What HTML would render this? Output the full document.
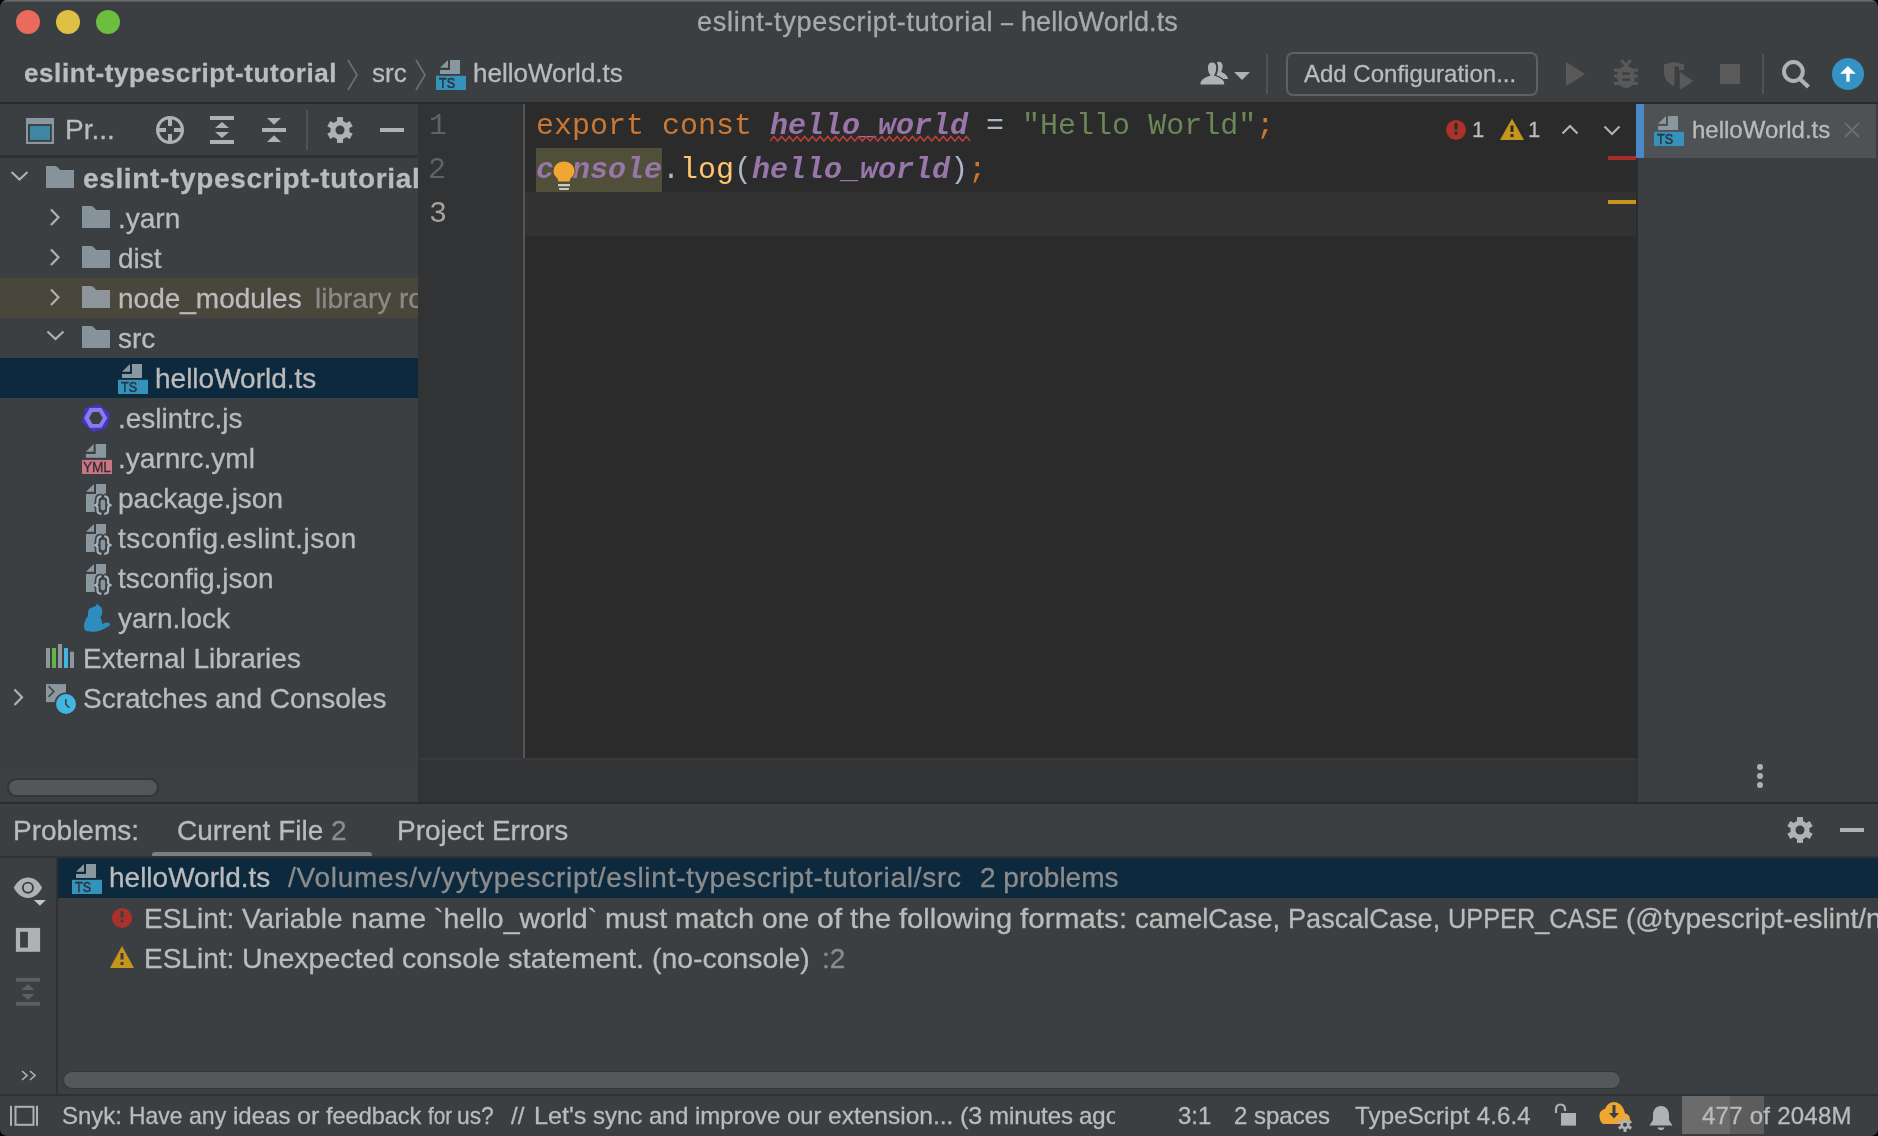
<!DOCTYPE html>
<html><head><meta charset="utf-8">
<style>
html,body{margin:0;padding:0;background:#000;width:1878px;height:1136px;overflow:hidden}
*{box-sizing:border-box}
#win{-webkit-font-smoothing:antialiased;will-change:transform;position:absolute;left:0;top:0;width:1878px;height:1136px;background:#3C3F41;border-radius:7px;overflow:hidden;font-family:"Liberation Sans",sans-serif;color:#BBBBBB}
.a{position:absolute}
.t{position:absolute;white-space:pre;line-height:1;-webkit-text-stroke:0.3px currentColor}
.tr{position:absolute;white-space:pre;line-height:1;font-size:28px;color:#BBBBBB;-webkit-text-stroke:0.3px currentColor}
.m{position:absolute;white-space:pre;line-height:1;font-family:"Liberation Mono",monospace;font-size:30px}
.kw{color:#CC7832}.gv{color:#9876AA;font-style:italic;font-weight:bold}.op{color:#A9B7C6}.st{color:#6A8759}.fn{color:#FFC66D}
svg.i{position:absolute;overflow:visible}
</style></head><body>
<div id="win">
  <!-- ===== TITLE BAR ===== -->
  <div class="a" style="left:0;top:0;width:1878px;height:1px;background:#6A6B6C"></div><div class="a" style="left:0;top:1px;width:1878px;height:1px;background:#56585A"></div>
  <div class="a" style="left:16px;top:10px;width:24px;height:24px;border-radius:50%;background:#EA6A5B"></div>
  <div class="a" style="left:56px;top:10px;width:24px;height:24px;border-radius:50%;background:#DEC045"></div>
  <div class="a" style="left:96px;top:10px;width:24px;height:24px;border-radius:50%;background:#6DBE3F"></div>
  <div class="t" style="left:697px;top:9px;font-size:27px;color:#A9A9A9;letter-spacing:0.72px">eslint-typescript-tutorial</div>
  <div class="t" style="left:1001px;top:9px;font-size:27px;color:#A9A9A9;transform:scaleX(0.8);transform-origin:0 0">–</div>
  <div class="t" style="left:1021px;top:9px;font-size:27px;color:#A9A9A9;letter-spacing:0.1px">helloWorld.ts</div>

  <!-- ===== NAV BAR ===== -->
  <div class="t" style="left:24px;top:60px;font-size:26px;font-weight:bold;color:#BCBCBC;letter-spacing:0.6px">eslint-typescript-tutorial</div>
  <svg class="i" style="left:340px;top:56px" width="24" height="36"><path d="M8 4 L17 19 L8 34" fill="none" stroke="#6F7173" stroke-width="1.6"/></svg>
  <div class="t" style="left:372px;top:60px;font-size:26px;color:#BBBBBB">src</div>
  <svg class="i" style="left:408px;top:56px" width="24" height="36"><path d="M8 4 L17 19 L8 34" fill="none" stroke="#6F7173" stroke-width="1.6"/></svg>
  <!-- TS icon nav -->
  <svg class="i" style="left:436px;top:60px" width="30" height="30" viewBox="0 0 30 30"><path d="M4 7.7 L12 0 L12 7.7 Z" fill="#8B979F"/>
        <path d="M14 0 H24 V14 H4 V10 H14 Z" fill="#8B979F"/>
        <rect x="0" y="15.8" width="30" height="14.2" fill="#3592BA"/>
        <text x="3" y="27.8" font-family="Liberation Sans" font-size="14" fill="#2B3640" stroke="#2B3640" stroke-width="0.5" textLength="16" lengthAdjust="spacingAndGlyphs">TS</text></svg>
  <div class="t" style="left:473px;top:60px;font-size:26px;color:#BBBBBB">helloWorld.ts</div>

  <!-- users icon -->
  <svg class="i" style="left:1195px;top:55px" width="60" height="40" viewBox="0 0 60 40">
    <path d="M21.8 7.5 C24.5 5.8 27.8 7.5 27.6 11.5 C27.5 14 26.8 15.5 26.2 16.8 C28.5 18.5 32.5 19.5 33.2 24 L28 24 C26 22 23 21 21 20.5 C22.8 18 23.5 14 23 11 C22.8 9.5 22.5 8.3 21.8 7.5 Z" fill="#B1B1B1"/>
    <path d="M17.1 7 C20.5 7 22 9.5 21.9 13 C21.8 16 21 18.5 19.8 20.2 C22.5 21.5 28.5 22.5 29.8 27.5 L29.8 30 L4.9 30 L4.9 28 C5.5 23 10.5 21.6 14.6 20.2 C13.2 18.5 12.3 16 12.3 13 C12.2 9.5 13.8 7 17.1 7 Z" fill="#B1B1B1" stroke="#3C3F41" stroke-width="1.2"/>
    <path d="M39.1 17.1 L54.9 17.1 L47 25 Z" fill="#B1B1B1"/>
  </svg>
  <div class="a" style="left:1266px;top:54px;width:2px;height:40px;background:#505254"></div>
  <div class="a" style="left:1286px;top:52px;width:252px;height:44px;border:2px solid #5E6163;border-radius:7px"></div>
  <div class="t" style="left:1304px;top:62px;font-size:24px;color:#BBBBBB">Add Configuration...</div>
  <!-- run / debug / coverage / stop (disabled) -->
  <svg class="i" style="left:1555px;top:50px" width="160" height="50" viewBox="1555 50 160 50">
    <path d="M1566 62 L1585.2 74 L1566 86.2 Z" fill="#59595A"/>
    <g fill="#59595A">
      <path d="M1621.3 60.3 L1626 65.5 L1630.7 60.3" fill="none" stroke="#59595A" stroke-width="3"/>
      <ellipse cx="1626" cy="77" rx="9" ry="11"/>
      <rect x="1614" y="68.7" width="24" height="3"/>
      <rect x="1614" y="74.7" width="24" height="3"/>
      <rect x="1614" y="82" width="24" height="3"/>
    </g>
    <rect x="1622.3" y="72.3" width="7.7" height="2.4" fill="#3C3F41"/>
    <rect x="1622.3" y="78.5" width="7.7" height="2.3" fill="#3C3F41"/>
    <path d="M1664 64.5 L1674 62 L1684 64.5 L1684 70 L1679 70 L1679 66.5 L1674.5 66.5 L1674.5 83 L1674 86.2 C1668 83 1664 79 1664 72 Z" fill="#59595A"/>
    <path d="M1679.8 72.1 L1693.4 81 L1679.8 89.9 Z" fill="#59595A"/>
  </svg>
  <div class="a" style="left:1720px;top:64px;width:20px;height:20px;background:#5A5A5A"></div>
  <div class="a" style="left:1762px;top:54px;width:2px;height:40px;background:#505254"></div>
  <svg class="i" style="left:1770px;top:50px" width="108" height="50" viewBox="1770 50 108 50">
    <circle cx="1793.4" cy="71.5" r="9.4" fill="none" stroke="#AFB1B3" stroke-width="4"/>
    <path d="M1799.5 78.5 L1808.5 87" stroke="#AFB1B3" stroke-width="4.2"/>
    <circle cx="1848" cy="74" r="16" fill="#3592C4"/>
    <path d="M1840.1 73.7 L1847.9 66.1 L1855.8 73.7 L1849.7 73.7 L1849.7 81.8 L1846.3 81.8 L1846.3 73.7 Z" fill="#FFFFFF"/>
  </svg>

  <div class="a" style="left:0;top:102px;width:1878px;height:2px;background:#2B2B2B"></div>

  <!-- ===== PROJECT PANEL ===== -->
  <div class="a" style="left:0;top:155px;width:418px;height:3px;background:#2F3133"></div>
  <svg class="i" style="left:26px;top:118px" width="28" height="26" viewBox="0 0 28 26">
    <rect x="0" y="0" width="28" height="26" fill="#8B979F"/>
    <rect x="2.1" y="6.1" width="23.7" height="17.7" fill="#3A3A3A"/>
    <rect x="3.9" y="7.9" width="20.2" height="14.2" fill="#3E87A4"/>
  </svg>
  <div class="tr" style="left:65px;top:116px">Pr...</div>
  <svg class="i" style="left:150px;top:110px" width="260" height="40" viewBox="0 0 260 40">
    <g fill="#AFB1B3">
      <circle cx="20" cy="20" r="12.4" fill="none" stroke="#AFB1B3" stroke-width="3.2"/>
      <rect x="18" y="8" width="4" height="8"/><rect x="18" y="24" width="4" height="8"/>
      <rect x="8" y="18" width="8" height="4"/><rect x="24" y="18" width="8" height="4"/>
      <rect x="60" y="6" width="24" height="4"/><rect x="60" y="30" width="24" height="4"/>
      <path d="M65 18 L72 12 L79 18 Z"/><path d="M65 22 L72 28 L79 22 Z"/>
      <rect x="112" y="18" width="24" height="4"/>
      <path d="M117 8 L131 8 L124 14.8 Z"/><path d="M117 32 L124 25.2 L131 32 Z"/>
    </g>
  </svg>
  <div class="a" style="left:306px;top:110px;width:2px;height:40px;background:#505254"></div>
  <svg class="i" style="left:320px;top:110px" width="90" height="40" viewBox="320 110 90 40">
    <g fill="#AFB1B3">
      <circle cx="340" cy="130" r="9.6"/>
      <rect x="337" y="117.1" width="6" height="25.8"/>
      <rect x="337" y="117.1" width="6" height="25.8" transform="rotate(60 340 130)"/>
      <rect x="337" y="117.1" width="6" height="25.8" transform="rotate(120 340 130)"/>
    </g>
    <circle cx="340" cy="130" r="4.5" fill="#3C3F41"/>
    <rect x="380" y="128" width="24" height="4" fill="#AFB1B3"/>
  </svg>

  <!-- tree -->
  <div class="a" style="left:0;top:278px;width:418px;height:40px;background:#49463B"></div>
  <div class="a" style="left:0;top:358px;width:418px;height:40px;background:#0D293E"></div>
  <div class="a" style="left:0;top:158px;width:418px;height:560px;overflow:hidden">
    <!-- row 0 -->
    <svg class="i" style="left:10px;top:10px" width="20" height="20"><path d="M1.5 4 L9.5 11.5 L17.5 4" fill="none" stroke="#AFB1B3" stroke-width="2.2"/></svg>
    <svg class="i" style="left:46px;top:8px" width="28" height="22"><path d="M0 0 H8.7 C10.5 0 11.5 1 12.5 2 L14 4 H28 V22 H0 Z" fill="#87939A"/></svg>
    <div class="tr" style="left:83px;top:7px;font-weight:bold;letter-spacing:0.65px">eslint-typescript-tutorial</div>
    <!-- row 1 .yarn -->
    <svg class="i" style="left:48px;top:50px" width="14" height="20"><path d="M3 1.5 L10.5 9.2 L3 17" fill="none" stroke="#AFB1B3" stroke-width="2.2"/></svg>
    <svg class="i" style="left:82px;top:48px" width="28" height="22"><path d="M0 0 H8.7 C10.5 0 11.5 1 12.5 2 L14 4 H28 V22 H0 Z" fill="#87939A"/></svg>
    <div class="tr" style="left:118px;top:47px">.yarn</div>
    <!-- row 2 dist -->
    <svg class="i" style="left:48px;top:90px" width="14" height="20"><path d="M3 1.5 L10.5 9.2 L3 17" fill="none" stroke="#AFB1B3" stroke-width="2.2"/></svg>
    <svg class="i" style="left:82px;top:88px" width="28" height="22"><path d="M0 0 H8.7 C10.5 0 11.5 1 12.5 2 L14 4 H28 V22 H0 Z" fill="#87939A"/></svg>
    <div class="tr" style="left:118px;top:87px">dist</div>
    <!-- row 3 node_modules -->
    <svg class="i" style="left:48px;top:130px" width="14" height="20"><path d="M3 1.5 L10.5 9.2 L3 17" fill="none" stroke="#AFB1B3" stroke-width="2.2"/></svg>
    <svg class="i" style="left:82px;top:128px" width="28" height="22"><path d="M0 0 H8.7 C10.5 0 11.5 1 12.5 2 L14 4 H28 V22 H0 Z" fill="#8D959A"/></svg>
    <div class="tr" style="left:118px;top:127px">node_modules</div>
    <div class="tr" style="left:315px;top:127px;color:#8A8A87">library root</div>
    <!-- row 4 src -->
    <svg class="i" style="left:46px;top:170px" width="20" height="20"><path d="M1.5 3.5 L9.5 11 L17.5 3.5" fill="none" stroke="#AFB1B3" stroke-width="2.2"/></svg>
    <svg class="i" style="left:82px;top:168px" width="28" height="22"><path d="M0 0 H8.7 C10.5 0 11.5 1 12.5 2 L14 4 H28 V22 H0 Z" fill="#87939A"/></svg>
    <div class="tr" style="left:118px;top:167px">src</div>
    <!-- row 5 helloWorld.ts -->
    <svg class="i" style="left:118px;top:206px" width="30" height="30" viewBox="0 0 30 30"><path d="M4 7.7 L12 0 L12 7.7 Z" fill="#8B979F"/>
        <path d="M14 0 H24 V14 H4 V10 H14 Z" fill="#8B979F"/>
        <rect x="0" y="15.8" width="30" height="14.2" fill="#3592BA"/>
        <text x="3" y="27.8" font-family="Liberation Sans" font-size="14" fill="#2B3640" stroke="#2B3640" stroke-width="0.5" textLength="16" lengthAdjust="spacingAndGlyphs">TS</text></svg>
    <div class="tr" style="left:155px;top:207px">helloWorld.ts</div>
    <!-- row 6 .eslintrc.js -->
    <svg class="i" style="left:76px;top:242px" width="40" height="40" viewBox="0 0 40 40">
      <path d="M22.5 4.2 L34.2 13.7 L31 27.8 L17.3 32 L6 22.2 L9.2 8.1 Z M13 18 L16.5 24 L23.2 24 L26.8 18 L23.2 12 L16.5 12 Z" fill="#4B32C3" fill-rule="evenodd"/>
      <path d="M8.1 18 L13.7 8.1 L25.4 8.1 L31.3 18 L25.4 27.8 L13.7 27.8 Z M13 18 L16.5 24 L23.2 24 L26.8 18 L23.2 12 L16.5 12 Z" fill="#8080E8" fill-rule="evenodd"/>
    </svg>
    <div class="tr" style="left:118px;top:247px">.eslintrc.js</div>
    <!-- row 7 .yarnrc.yml -->
    <svg class="i" style="left:82px;top:286px" width="30" height="30" viewBox="0 0 30 30">
      <path d="M3.9 7.8 L11.6 0 L11.6 7.8 Z" fill="#8B979F"/>
      <path d="M13.7 0 H24.1 V13.7 H3.9 V9.9 H13.7 Z" fill="#8B979F"/>
      <rect x="0" y="15.9" width="30" height="14.1" fill="#C77783"/>
      <text x="0.9" y="27.6" font-family="Liberation Sans" font-size="14" fill="#3A2A30" stroke="#3A2A30" stroke-width="0.3" textLength="28" lengthAdjust="spacingAndGlyphs">YML</text>
    </svg>
    <div class="tr" style="left:118px;top:287px">.yarnrc.yml</div>
    <!-- rows 8-10 json -->
    <svg class="i" style="left:76px;top:320px" width="40" height="40" viewBox="0 0 40 40"><path d="M10 13.7 L18 6 L18 13.7 Z" fill="#8B979F"/>
        <path d="M20 6 H30 V16.5 H21 V34 H10 V16 H20 Z" fill="#8B979F"/>
        <path d="M25.4 18.3 C22.5 18.3 21.5 19.5 21.5 22 L21.5 24.5 C21.5 26.2 20.5 27.1 18.3 27.1 C20.5 27.1 21.5 28 21.5 29.7 L21.5 32.5 C21.5 35 22.5 35.8 25.4 35.8 M28.2 18.3 C31.1 18.3 32.1 19.5 32.1 22 L32.1 24.5 C32.1 26.2 33.1 27.1 35.6 27.1 C33.1 27.1 32.1 28 32.1 29.7 L32.1 32.5 C32.1 35 31.1 35.8 28.2 35.8" fill="none" stroke="#3C3F41" stroke-width="5.6"/>
        <rect x="22.5" y="19.5" width="8.6" height="15" fill="#3C3F41"/>
        <path d="M25.4 18.3 C22.5 18.3 21.5 19.5 21.5 22 L21.5 24.5 C21.5 26.2 20.5 27.1 18.3 27.1 C20.5 27.1 21.5 28 21.5 29.7 L21.5 32.5 C21.5 35 22.5 35.8 25.4 35.8 M28.2 18.3 C31.1 18.3 32.1 19.5 32.1 22 L32.1 24.5 C32.1 26.2 33.1 27.1 35.6 27.1 C33.1 27.1 32.1 28 32.1 29.7 L32.1 32.5 C32.1 35 31.1 35.8 28.2 35.8" fill="none" stroke="#A7B3BD" stroke-width="2.2"/>
        <rect x="24.6" y="21.5" width="4.6" height="10.9" rx="2.3" fill="#8B979F"/></svg>
    <div class="tr" style="left:118px;top:327px">package.json</div>
    <svg class="i" style="left:76px;top:360px" width="40" height="40" viewBox="0 0 40 40"><path d="M10 13.7 L18 6 L18 13.7 Z" fill="#8B979F"/>
        <path d="M20 6 H30 V16.5 H21 V34 H10 V16 H20 Z" fill="#8B979F"/>
        <path d="M25.4 18.3 C22.5 18.3 21.5 19.5 21.5 22 L21.5 24.5 C21.5 26.2 20.5 27.1 18.3 27.1 C20.5 27.1 21.5 28 21.5 29.7 L21.5 32.5 C21.5 35 22.5 35.8 25.4 35.8 M28.2 18.3 C31.1 18.3 32.1 19.5 32.1 22 L32.1 24.5 C32.1 26.2 33.1 27.1 35.6 27.1 C33.1 27.1 32.1 28 32.1 29.7 L32.1 32.5 C32.1 35 31.1 35.8 28.2 35.8" fill="none" stroke="#3C3F41" stroke-width="5.6"/>
        <rect x="22.5" y="19.5" width="8.6" height="15" fill="#3C3F41"/>
        <path d="M25.4 18.3 C22.5 18.3 21.5 19.5 21.5 22 L21.5 24.5 C21.5 26.2 20.5 27.1 18.3 27.1 C20.5 27.1 21.5 28 21.5 29.7 L21.5 32.5 C21.5 35 22.5 35.8 25.4 35.8 M28.2 18.3 C31.1 18.3 32.1 19.5 32.1 22 L32.1 24.5 C32.1 26.2 33.1 27.1 35.6 27.1 C33.1 27.1 32.1 28 32.1 29.7 L32.1 32.5 C32.1 35 31.1 35.8 28.2 35.8" fill="none" stroke="#A7B3BD" stroke-width="2.2"/>
        <rect x="24.6" y="21.5" width="4.6" height="10.9" rx="2.3" fill="#8B979F"/></svg>
    <div class="tr" style="left:118px;top:367px;letter-spacing:0.5px">tsconfig.eslint.json</div>
    <svg class="i" style="left:76px;top:400px" width="40" height="40" viewBox="0 0 40 40"><path d="M10 13.7 L18 6 L18 13.7 Z" fill="#8B979F"/>
        <path d="M20 6 H30 V16.5 H21 V34 H10 V16 H20 Z" fill="#8B979F"/>
        <path d="M25.4 18.3 C22.5 18.3 21.5 19.5 21.5 22 L21.5 24.5 C21.5 26.2 20.5 27.1 18.3 27.1 C20.5 27.1 21.5 28 21.5 29.7 L21.5 32.5 C21.5 35 22.5 35.8 25.4 35.8 M28.2 18.3 C31.1 18.3 32.1 19.5 32.1 22 L32.1 24.5 C32.1 26.2 33.1 27.1 35.6 27.1 C33.1 27.1 32.1 28 32.1 29.7 L32.1 32.5 C32.1 35 31.1 35.8 28.2 35.8" fill="none" stroke="#3C3F41" stroke-width="5.6"/>
        <rect x="22.5" y="19.5" width="8.6" height="15" fill="#3C3F41"/>
        <path d="M25.4 18.3 C22.5 18.3 21.5 19.5 21.5 22 L21.5 24.5 C21.5 26.2 20.5 27.1 18.3 27.1 C20.5 27.1 21.5 28 21.5 29.7 L21.5 32.5 C21.5 35 22.5 35.8 25.4 35.8 M28.2 18.3 C31.1 18.3 32.1 19.5 32.1 22 L32.1 24.5 C32.1 26.2 33.1 27.1 35.6 27.1 C33.1 27.1 32.1 28 32.1 29.7 L32.1 32.5 C32.1 35 31.1 35.8 28.2 35.8" fill="none" stroke="#A7B3BD" stroke-width="2.2"/>
        <rect x="24.6" y="21.5" width="4.6" height="10.9" rx="2.3" fill="#8B979F"/></svg>
    <div class="tr" style="left:118px;top:407px">tsconfig.json</div>
    <!-- row 11 yarn.lock -->
    <svg class="i" style="left:76px;top:440px" width="40" height="40" viewBox="0 0 40 40">
      <path d="M21.1 6 C22 6.3 22.5 7.2 23 7.7 C24.5 8.3 25.6 9.3 25.9 11 C26.3 13 26.2 15 25.9 16 C25.6 17.5 24.8 18.5 24.4 19.6 C25.3 21 25.9 23 26.3 26.2 C27.5 25.5 29 24.6 31 24.5 C33 24.4 34.2 25.3 34 26.8 C33.8 28 32.5 28.6 31.5 29 C29 30.2 27 31.5 24.6 32.4 C21.5 33.5 18.5 33.8 15.8 33.7 C13.5 33.6 11.5 33.5 10.2 33 C8.5 32.3 8 30.5 8 28.5 C8 25.5 8.8 23 10 21 C10.7 19.8 11.2 19 11.9 18.2 C11.9 16.5 12 14 12.4 12.3 C13 10.5 14.5 9.8 16.9 9.2 C18.3 8.8 19.4 8.2 20 7.2 C20.4 6.5 20.7 6 21.1 6 Z" fill="#2E8DBE"/>
    </svg>
    <div class="tr" style="left:118px;top:447px">yarn.lock</div>
    <!-- row 12 External Libraries -->
    <svg class="i" style="left:46px;top:490px" width="28" height="24" viewBox="46 648 28 24">
      <rect x="46" y="648" width="4" height="20" fill="#8B979F"/>
      <rect x="52" y="648" width="4" height="20" fill="#62B543"/>
      <rect x="58" y="644" width="4" height="24" fill="#8B979F"/>
      <rect x="64" y="648" width="4" height="20" fill="#40B6E0"/>
      <rect x="70" y="651.7" width="4" height="16.3" fill="#8B979F"/>
    </svg>
    <div class="tr" style="left:83px;top:487px">External Libraries</div>
    <!-- row 13 Scratches -->
    <svg class="i" style="left:12px;top:530px" width="14" height="20"><path d="M2.5 1.5 L10 9.2 L2.5 17" fill="none" stroke="#AFB1B3" stroke-width="2.2"/></svg>
    <svg class="i" style="left:0;top:520px" width="80" height="40" viewBox="0 678 80 40">
      <rect x="46" y="684.1" width="20" height="18" fill="#8B979F"/>
      <path d="M48.6 686.2 L53.8 691.5 L48.6 696.8" fill="none" stroke="#3C3F41" stroke-width="1.6"/>
      <circle cx="66" cy="704" r="11.6" fill="#3C3F41"/>
      <circle cx="66" cy="704" r="10" fill="#40B6E0"/>
      <path d="M65.8 699.3 L65.8 704.2 L69.4 707.7" fill="none" stroke="#3C3F41" stroke-width="1.6"/>
    </svg>
    <div class="tr" style="left:83px;top:527px">Scratches and Consoles</div>
  </div>
  <!-- project scrollbar -->
  <div class="a" style="left:0;top:774px;width:418px;height:28px;background:#3D4043"></div>
  <div class="a" style="left:7px;top:778px;width:152px;height:19px;border-radius:10px;background:#555658;border:2px solid #333537"></div>

  <!-- ===== EDITOR ===== -->
  <div class="a" style="left:418px;top:104px;width:105px;height:654px;background:#313335"></div>
  <div class="a" style="left:523px;top:104px;width:2px;height:654px;background:#555555"></div>
  <div class="a" style="left:525px;top:104px;width:1111px;height:654px;background:#2B2B2B"></div>
  <div class="a" style="left:525px;top:192px;width:1111px;height:44px;background:#323232"></div>
  <div class="a" style="left:418px;top:758px;width:1220px;height:44px;background:#313335"></div>
  <div class="a" style="left:420px;top:758px;width:1216px;height:2px;background:#39393B"></div>
  <!-- line numbers -->
  <div class="m" style="left:429px;top:111px;color:#606366">1</div>
  <div class="m" style="left:428px;top:155px;color:#606366">2</div>
  <div class="m" style="left:429px;top:199px;color:#A4A3A3">3</div>
  <!-- code -->
  <div class="a" style="left:536px;top:148px;width:126px;height:44px;background:#504F3A"></div>
  <div class="m" style="left:536px;top:111px"><span class="kw">export const </span><span class="gv">hello_world</span><span class="op"> = </span><span class="st">"Hello World"</span><span class="kw">;</span></div>
  <div class="m" style="left:536px;top:155px"><span class="gv">console</span><span class="op">.</span><span class="fn">log</span><span class="op">(</span><span class="gv">hello_world</span><span class="op">)</span><span class="kw">;</span></div>
  <svg class="i" style="left:760px;top:130px" width="220" height="16" viewBox="760 130 220 16">
    <path d="M770.0 141 L773.9 136.5 L777.7 141 L781.6 136.5 L785.4 141 L789.3 136.5 L793.1 141 L797.0 136.5 L800.8 141 L804.7 136.5 L808.5 141 L812.4 136.5 L816.2 141 L820.1 136.5 L823.9 141 L827.8 136.5 L831.6 141 L835.5 136.5 L839.3 141 L843.2 136.5 L847.0 141 L850.9 136.5 L854.7 141 L858.6 136.5 L862.4 141 L866.3 136.5 L870.1 141 L874.0 136.5 L877.8 141 L881.7 136.5 L885.5 141 L889.4 136.5 L893.2 141 L897.1 136.5 L900.9 141 L904.8 136.5 L908.6 141 L912.5 136.5 L916.3 141 L920.2 136.5 L924.0 141 L927.9 136.5 L931.7 141 L935.6 136.5 L939.4 141 L943.3 136.5 L947.1 141 L951.0 136.5 L954.8 141 L958.7 136.5 L962.5 141 L966.4 136.5 L970.2 141" fill="none" stroke="#BC3F3C" stroke-width="1.5"/>
  </svg>
  <!-- lightbulb -->
  <svg class="i" style="left:550px;top:158px" width="30" height="36" viewBox="550 158 30 36">
    <path d="M558 182 L570 182 L571 178.5 C573 176.5 575 174.5 575 171.5 C575 165.5 570 161 564 161 C558 161 553 165.5 553 171.5 C553 174.5 555 176.5 557 178.5 Z" fill="#F0A732" stroke="#4F4D39" stroke-width="1"/>
    <rect x="558" y="184" width="12" height="2.3" fill="#C9C9C9"/>
    <path d="M558.8 188 L569.2 188 L568.5 190 L559.5 190 Z" fill="#C9C9C9"/>
  </svg>
  <!-- inspection widget -->
  <svg class="i" style="left:1440px;top:114px" width="190" height="30" viewBox="1440 114 190 30">
    <circle cx="1456" cy="130" r="10" fill="#AC312C"/>
    <rect x="1454.5" y="123" width="3" height="6.5" fill="#2B2B2B"/>
    <rect x="1454.5" y="131.5" width="3" height="3" fill="#2B2B2B"/>
    <path d="M1512 118.5 L1524 140 L1500 140 Z" fill="#C7951B"/>
    <rect x="1510.5" y="125.5" width="3" height="6.5" fill="#2B2B2B"/>
    <rect x="1510.5" y="134" width="3" height="3" fill="#2B2B2B"/>
    <path d="M1562.5 133.5 L1570 126 L1577.5 133.5" fill="none" stroke="#AFB1B3" stroke-width="2.2"/>
    <path d="M1604.5 126.5 L1612 134 L1619.5 126.5" fill="none" stroke="#AFB1B3" stroke-width="2.2"/>
  </svg>
  <div class="t" style="left:1472px;top:119px;font-size:22px;color:#BBBBBB">1</div>
  <div class="t" style="left:1528px;top:119px;font-size:22px;color:#BBBBBB">1</div>
  <!-- error stripe marks -->
  <div class="a" style="left:1608px;top:156px;width:28px;height:4px;background:#A72D2A"></div>
  <div class="a" style="left:1608px;top:200px;width:28px;height:4px;background:#C7951B"></div>

  <!-- ===== RIGHT TAB PANEL ===== -->
  <div class="a" style="left:1636px;top:104px;width:2px;height:654px;background:#2B2B2B"></div>
  <div class="a" style="left:1636px;top:104px;width:240px;height:54px;background:#4E5254"></div>
  <div class="a" style="left:1636px;top:104px;width:8px;height:54px;background:#4A88C7"></div>
  <svg class="i" style="left:1654px;top:116px" width="30" height="30" viewBox="0 0 30 30"><path d="M4 7.7 L12 0 L12 7.7 Z" fill="#8B979F"/>
        <path d="M14 0 H24 V14 H4 V10 H14 Z" fill="#8B979F"/>
        <rect x="0" y="15.8" width="30" height="14.2" fill="#3592BA"/>
        <text x="3" y="27.8" font-family="Liberation Sans" font-size="14" fill="#2B3640" stroke="#2B3640" stroke-width="0.5" textLength="16" lengthAdjust="spacingAndGlyphs">TS</text></svg>
  <div class="t" style="left:1692px;top:118px;font-size:24px;color:#BBBBBB">helloWorld.ts</div>
  <svg class="i" style="left:1844px;top:122px" width="16" height="16"><path d="M1 1 L15 15 M15 1 L1 15" stroke="#6B6E70" stroke-width="1.8"/></svg>
  <div class="a" style="left:1757px;top:764px;width:6px;height:6px;border-radius:50%;background:#AFB1B3"></div>
  <div class="a" style="left:1757px;top:773px;width:6px;height:6px;border-radius:50%;background:#AFB1B3"></div>
  <div class="a" style="left:1757px;top:782px;width:6px;height:6px;border-radius:50%;background:#AFB1B3"></div>

  <!-- ===== PROBLEMS PANEL ===== -->
  <div class="a" style="left:0;top:802px;width:1878px;height:2px;background:#2B2B2B"></div>
  <div class="tr" style="left:13px;top:817px">Problems:</div>
  <div class="tr" style="left:177px;top:817px">Current File <span style="color:#8C8C8C">2</span></div>
  <div class="tr" style="left:397px;top:817px">Project Errors</div>
  <div class="a" style="left:152px;top:852px;width:220px;height:6px;border-radius:3px;background:#7B7F83"></div>
  <svg class="i" style="left:1780px;top:810px" width="98" height="40" viewBox="1780 810 98 40">
    <g fill="#AFB1B3">
      <circle cx="1800" cy="830" r="9.6"/>
      <rect x="1797" y="817.1" width="6" height="25.8"/>
      <rect x="1797" y="817.1" width="6" height="25.8" transform="rotate(60 1800 830)"/>
      <rect x="1797" y="817.1" width="6" height="25.8" transform="rotate(120 1800 830)"/>
    </g>
    <circle cx="1800" cy="830" r="4.5" fill="#3C3F41"/>
    <rect x="1840" y="828" width="24" height="4" fill="#AFB1B3"/>
  </svg>
  <div class="a" style="left:0;top:856px;width:1878px;height:2px;background:#2F3133"></div>
  <div class="a" style="left:56px;top:858px;width:2px;height:236px;background:#2F3133"></div>
  <div class="a" style="left:58px;top:858px;width:1820px;height:40px;background:#0D293E"></div>
  <!-- left toolbar icons -->
  <svg class="i" style="left:0;top:860px" width="56" height="230" viewBox="0 860 56 230">
    <path d="M13.8 887.8 C17 881.5 22 877.6 28 877.6 C34 877.6 39 881.5 42 887.8 C39 894 34 898 28 898 C22 898 17 894 13.8 887.8 Z" fill="#AFB1B3"/>
    <circle cx="27.9" cy="887.7" r="6.0" fill="#3C3F41"/>
    <circle cx="27.9" cy="887.7" r="4.1" fill="#AFB1B3"/>
    <path d="M33.8 900.1 L45.8 900.1 L39.9 905.8 Z" fill="#C6C6C6"/>
    <rect x="15.9" y="927.9" width="24.2" height="23.9" fill="#AFB1B3"/>
    <rect x="20.1" y="931.8" width="7.8" height="15.8" fill="#3C3F41"/>
    <g fill="#5C5E60">
      <rect x="15.9" y="978" width="24.2" height="3.8"/><rect x="15.9" y="1002" width="24.2" height="3.8"/>
      <path d="M21.1 989.9 L27.9 984 L34.5 989.9 Z"/><path d="M21.1 994 L34.5 994 L27.9 1000 Z"/>
    </g>
    <path d="M22 1071 L27 1075.5 L22 1080 M30 1071 L35 1075.5 L30 1080" fill="none" stroke="#AFB1B3" stroke-width="1.6"/>
  </svg>
  <!-- rows -->
  <svg class="i" style="left:72px;top:864px" width="30" height="30" viewBox="0 0 30 30"><path d="M4 7.7 L12 0 L12 7.7 Z" fill="#8B979F"/>
        <path d="M14 0 H24 V14 H4 V10 H14 Z" fill="#8B979F"/>
        <rect x="0" y="15.8" width="30" height="14.2" fill="#3592BA"/>
        <text x="3" y="27.8" font-family="Liberation Sans" font-size="14" fill="#2B3640" stroke="#2B3640" stroke-width="0.5" textLength="16" lengthAdjust="spacingAndGlyphs">TS</text></svg>
  <div class="tr" style="left:109px;top:864px">helloWorld.ts</div>
  <div class="tr" style="left:288px;top:864px;color:#8C8C8C;letter-spacing:0.75px">/Volumes/v/yytypescript/eslint-typescript-tutorial/src</div>
  <div class="tr" style="left:980px;top:864px;color:#8C8C8C">2 problems</div>
  <svg class="i" style="left:100px;top:900px" width="40" height="80" viewBox="100 900 40 80">
    <circle cx="122" cy="918" r="10" fill="#AC312C"/>
    <rect x="120.5" y="911" width="3" height="6.5" fill="#3C3F41"/>
    <rect x="120.5" y="919.5" width="3" height="3" fill="#3C3F41"/>
    <path d="M122 946 L134 968 L110 968 Z" fill="#C7951B"/>
    <rect x="120.5" y="953" width="3" height="6.5" fill="#3C3F41"/>
    <rect x="120.5" y="962" width="3" height="3" fill="#3C3F41"/>
  </svg>
  <div class="tr" style="left:144px;top:905px">ESLint:</div>
  <div class="tr" style="left:242px;top:905px">Variable</div>
  <div class="tr" style="left:351px;top:905px;transform:scaleX(1.074);transform-origin:0 0">name</div>
  <div class="tr" style="left:434px;top:905px;transform:scaleX(1.018);transform-origin:0 0">`hello_world`</div>
  <div class="tr" style="left:605px;top:905px;transform:scaleX(1.025);transform-origin:0 0">must</div>
  <div class="tr" style="left:675px;top:905px;transform:scaleX(1.039);transform-origin:0 0">match</div>
  <div class="tr" style="left:762px;top:905px;transform:scaleX(1.011);transform-origin:0 0">one</div>
  <div class="tr" style="left:817px;top:905px;transform:scaleX(1.08);transform-origin:0 0">of</div>
  <div class="tr" style="left:850px;top:905px;transform:scaleX(1.059);transform-origin:0 0">the</div>
  <div class="tr" style="left:899px;top:905px;transform:scaleX(1.039);transform-origin:0 0">following</div>
  <div class="tr" style="left:1020px;top:905px;transform:scaleX(1.06);transform-origin:0 0">formats:</div>
  <div class="tr" style="left:1135px;top:905px;transform:scaleX(0.982);transform-origin:0 0">camelCase,</div>
  <div class="tr" style="left:1288px;top:905px;transform:scaleX(0.968);transform-origin:0 0">PascalCase,</div>
  <div class="tr" style="left:1448px;top:905px;transform:scaleX(0.904);transform-origin:0 0">UPPER_CASE</div>
  <div class="tr" style="left:1626px;top:905px">(@typescript-eslint/naming-convention)</div>
  <div class="tr" style="left:144px;top:945px">ESLint:</div>
  <div class="tr" style="left:242px;top:945px;transform:scaleX(1.019);transform-origin:0 0">Unexpected</div>
  <div class="tr" style="left:402px;top:945px;transform:scaleX(1.018);transform-origin:0 0">console</div>
  <div class="tr" style="left:508px;top:945px;transform:scaleX(1.042);transform-origin:0 0">statement.</div>
  <div class="tr" style="left:652px;top:945px;transform:scaleX(1.014);transform-origin:0 0">(no-console)</div>
  <div class="tr" style="left:822px;top:945px;color:#8C8C8C">:2</div>
  <!-- problems scrollbar -->
  <div class="a" style="left:63px;top:1071px;width:1558px;height:18px;border-radius:9px;background:#565759;border:1px solid #323436"></div>

  <!-- ===== STATUS BAR ===== -->
  <div class="a" style="left:0;top:1094px;width:1878px;height:2px;background:#2F3133"></div>
  <svg class="i" style="left:8px;top:1104px" width="32" height="24" viewBox="0 0 32 24">
    <rect x="2" y="1.8" width="2" height="20" fill="#AFB1B3"/>
    <rect x="7.5" y="2.8" width="18" height="18" fill="none" stroke="#AFB1B3" stroke-width="2"/>
    <rect x="28" y="1.8" width="2" height="20" fill="#AFB1B3"/>
  </svg>
  <div class="a" style="left:62px;top:1096px;width:1053px;height:40px;overflow:hidden">
    <div class="tr" style="left:0px;top:8px;font-size:24px">Snyk:</div>
  <div class="tr" style="left:67px;top:8px;font-size:24px;transform:scaleX(0.952);transform-origin:0 0">Have</div>
  <div class="tr" style="left:127px;top:8px;font-size:24px;transform:scaleX(0.964);transform-origin:0 0">any</div>
  <div class="tr" style="left:171px;top:8px;font-size:24px">ideas</div>
  <div class="tr" style="left:235px;top:8px;font-size:24px;transform:scaleX(1.046);transform-origin:0 0">or</div>
  <div class="tr" style="left:264px;top:8px;font-size:24px;transform:scaleX(0.979);transform-origin:0 0">feedback</div>
  <div class="tr" style="left:366px;top:8px;font-size:24px;transform:scaleX(0.86);transform-origin:0 0">for</div>
  <div class="tr" style="left:395px;top:8px;font-size:24px;transform:scaleX(0.95);transform-origin:0 0">us?</div>
  <div class="tr" style="left:449px;top:8px;font-size:24px">//</div>
  <div class="tr" style="left:472px;top:8px;font-size:24px;transform:scaleX(1.048);transform-origin:0 0">Let's</div>
  <div class="tr" style="left:531px;top:8px;font-size:24px">sync</div>
  <div class="tr" style="left:587px;top:8px;font-size:24px;transform:scaleX(0.982);transform-origin:0 0">and</div>
  <div class="tr" style="left:633px;top:8px;font-size:24px">improve</div>
  <div class="tr" style="left:725px;top:8px;font-size:24px;transform:scaleX(0.99);transform-origin:0 0">our</div>
  <div class="tr" style="left:766px;top:8px;font-size:24px;transform:scaleX(1.021);transform-origin:0 0">extension...</div>
  <div class="tr" style="left:898px;top:8px;font-size:24px;transform:scaleX(1.046);transform-origin:0 0">(3</div>
  <div class="tr" style="left:927px;top:8px;font-size:24px">minutes</div>
  <div class="tr" style="left:1017px;top:8px;font-size:24px">ago)</div>
  </div>
  <div class="t" style="left:1178px;top:1104px;font-size:24px">3:1</div>
  <div class="t" style="left:1234px;top:1104px;font-size:24px">2 spaces</div>
  <div class="t" style="left:1355px;top:1104px;font-size:24px;letter-spacing:0.15px">TypeScript 4.6.4</div>
  <svg class="i" style="left:1550px;top:1100px" width="130" height="36" viewBox="1550 1100 130 36">
    <path d="M1556 1113 L1556 1109.5 C1556 1106 1558 1104.5 1560.5 1104.5 C1563 1104.5 1565 1106 1565 1109.5 L1565 1111" fill="none" stroke="#AFB1B3" stroke-width="2.2"/>
    <rect x="1561" y="1113" width="15" height="12.6" fill="#AFB1B3"/>
    <path d="M1604 1124 L1625 1124 C1630 1124 1631 1119 1629 1116 C1628 1114 1626 1113.5 1625 1113.5 C1624 1107 1619.5 1102 1614 1102 C1609 1102 1606 1106 1605 1109 C1601 1109.5 1599.5 1113 1599.5 1116 C1599.5 1120 1601.5 1124 1604 1124 Z" fill="#F0A732"/>
    <path d="M1612.5 1105 L1615.5 1105 L1615.5 1113 L1619 1113 L1614 1118.5 L1609 1113 L1612.5 1113 Z" fill="#3C3F41"/>
    <g fill="#AFB1B3">
      <circle cx="1625" cy="1124.8" r="4.6"/>
      <rect x="1623.5" y="1117.6" width="3" height="14.4"/>
      <rect x="1623.5" y="1117.6" width="3" height="14.4" transform="rotate(60 1625 1124.8)"/>
      <rect x="1623.5" y="1117.6" width="3" height="14.4" transform="rotate(120 1625 1124.8)"/>
    </g>
    <circle cx="1625" cy="1124.8" r="2" fill="#3C3F41"/>
    <path d="M1661 1106 C1666.5 1106 1669 1110.5 1669 1115 L1669 1120 L1672.5 1125.5 L1649.5 1125.5 L1653 1120 L1653 1115 C1653 1110.5 1655.5 1106 1661 1106 Z M1657.5 1127.5 L1664.5 1127.5 C1664 1129.5 1662.5 1130 1661 1130 C1659.5 1130 1658 1129.5 1657.5 1127.5 Z" fill="#AFB1B3"/>
  </svg>
  <div class="a" style="left:1682px;top:1096px;width:48px;height:38px;background:#6B6B6B"></div>
  <div class="a" style="left:1730px;top:1096px;width:34px;height:38px;background:#5C5C5C"></div>
  <div class="t" style="left:1702px;top:1104px;font-size:24px;color:#BBBBBB;letter-spacing:0.25px">477 of 2048M</div>

  
</div>
</body></html>
